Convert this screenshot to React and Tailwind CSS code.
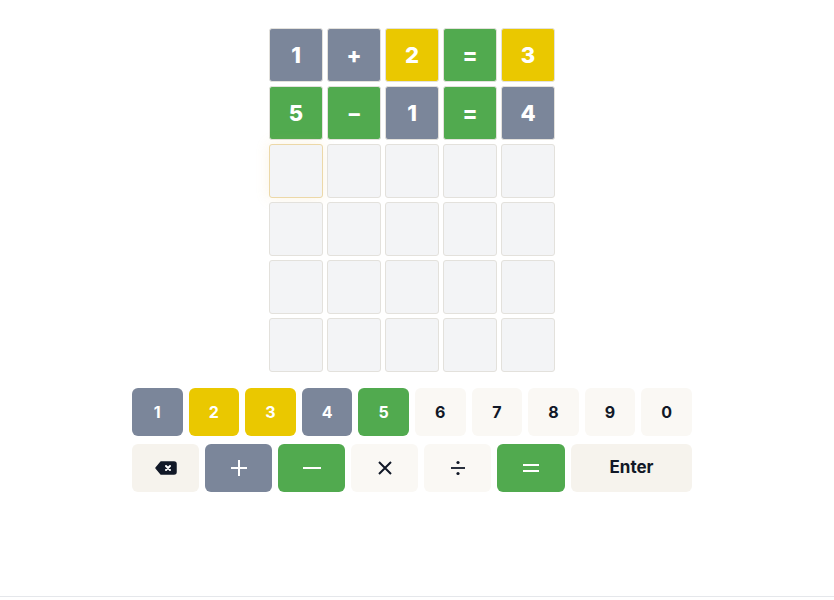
import React from 'react';

const FONT = { fontFamily: 'Inter, "Noto Sans", sans-serif' };

const COLORS = {
  gray: 'bg-[#7b869a] text-white',
  yellow: 'bg-[#eac800] text-white',
  green: 'bg-[#51aa4f] text-white',
};

const rows = [
  [['1', 'gray'], ['+', 'gray'], ['2', 'yellow'], ['=', 'green'], ['3', 'yellow']],
  [['5', 'green'], ['-', 'green'], ['1', 'gray'], ['=', 'green'], ['4', 'gray']],
];

const numberKeys = [
  ['1', 'gray'], ['2', 'yellow'], ['3', 'yellow'], ['4', 'gray'], ['5', 'green'],
  ['6'], ['7'], ['8'], ['9'], ['0'],
];

const Backspace = () => (
  <svg width="22" height="14" viewBox="0 0 22 14">
    <path d="M6 1 H19 a2 2 0 0 1 2 2 V11 a2 2 0 0 1 -2 2 H6 L1 7 Z" fill="#111827" stroke="#111827" strokeLinejoin="round" strokeWidth="1.5" />
    <path d="M11 5 L15 9 M15 5 L11 9" stroke="#fff" strokeWidth="2" strokeLinecap="round" />
  </svg>
);

const Plus = () => (
  <svg width="20" height="20" viewBox="0 0 20 20">
    <path d="M10 2 V18 M2 10 H18" stroke="currentColor" strokeWidth="2" />
  </svg>
);

const Minus = () => (
  <svg width="22" height="20" viewBox="0 0 22 20">
    <path d="M2 10 H20" stroke="currentColor" strokeWidth="2" />
  </svg>
);

const Times = () => (
  <svg width="16" height="16" viewBox="0 0 16 16">
    <path d="M2 2 L14 14 M14 2 L2 14" stroke="currentColor" strokeWidth="2" />
  </svg>
);

const Divide = () => (
  <svg width="18" height="18" viewBox="0 0 18 18">
    <path d="M2 9 H16" stroke="currentColor" strokeWidth="1.8" />
    <circle cx="9" cy="3.5" r="1.6" fill="currentColor" />
    <circle cx="9" cy="14.5" r="1.6" fill="currentColor" />
  </svg>
);

const Equals = () => (
  <svg width="20" height="16" viewBox="0 0 20 16">
    <path d="M2 5 H18 M2 11 H18" stroke="currentColor" strokeWidth="2" />
  </svg>
);

const Tile = ({ value, color, active }) => {
  if (!value) {
    return (
      <div
        className={`w-[54px] h-[54px] rounded-[3px] border bg-[#f3f4f6] ${
          active ? 'border-[#ecd8a8] shadow-[0_0_14px_rgba(234,190,100,0.18)]' : 'border-[#e3e1dc]'
        }`}
      />
    );
  }
  return (
    <div className={`w-[54px] h-[54px] rounded-[3px] border border-[#e3e1dc] flex items-center justify-center text-[22px] font-extrabold ${COLORS[color]}`}>
      {value === '-' ? <span className="inline-block scale-x-150">-</span> : value}
    </div>
  );
};

const Key = ({ children, color, className = '', plain = 'bg-[#faf8f4] text-[#111827]' }) => (
  <button className={`h-12 rounded-md flex items-center justify-center font-bold text-[16px] ${color ? COLORS[color] : plain} ${className}`}>
    {children}
  </button>
);

export default function App() {
  const grid = [];
  for (let r = 0; r < 6; r++) {
    const row = rows[r] || [[], [], [], [], []];
    grid.push(
      <div key={r} className="flex gap-1">
        {row.map(([v, c], i) => (
          <Tile key={i} value={v} color={c} active={r === 2 && i === 0} />
        ))}
      </div>
    );
  }

  return (
    <div className="h-[597px] border-b border-gray-200 bg-white" style={FONT}>
      <div className="w-[824px] flex flex-col items-center pt-[28px]">
        <div className="flex flex-col gap-1">{grid}</div>

        <div className="w-[560px] mt-4 flex flex-col gap-2">
          <div className="flex gap-[6px]">
            {numberKeys.map(([v, c]) => (
              <Key key={v} color={c} className="flex-1">{v}</Key>
            ))}
          </div>
          <div className="flex gap-[6px]">
            <Key className="w-[67px]" plain="bg-[#f6f3ed] text-[#111827]"><Backspace /></Key>
            <Key className="w-[67px]" color="gray"><Plus /></Key>
            <Key className="w-[67px]" color="green"><Minus /></Key>
            <Key className="w-[67px]"><Times /></Key>
            <Key className="w-[67px]"><Divide /></Key>
            <Key className="w-[68px]" color="green"><Equals /></Key>
            <Key className="flex-1 text-[17px]" plain="bg-[#f6f3ed] text-[#111827]">Enter</Key>
          </div>
        </div>
      </div>
    </div>
  );
}
